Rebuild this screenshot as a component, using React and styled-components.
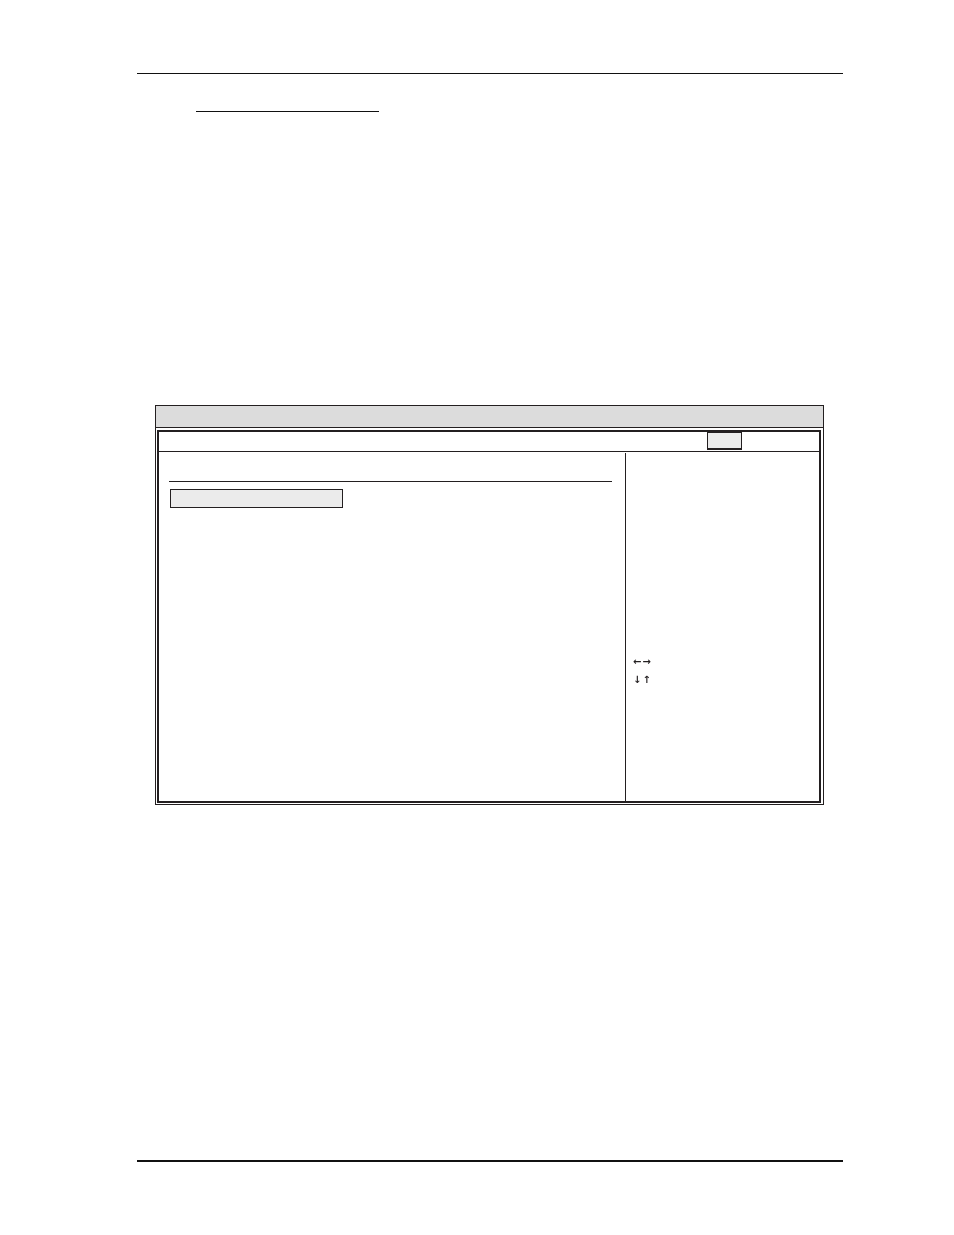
import React from 'react';
import styled, { createGlobalStyle } from 'styled-components';

const Global = createGlobalStyle`
  html, body {
    margin: 0;
    padding: 0;
    background: #fff;
    font-family: "Liberation Sans", Arial, sans-serif;
    -webkit-font-smoothing: antialiased;
  }
`;

const Page = styled.div`
  width: 954px;
  height: 1235px;
  box-sizing: border-box;
  padding: 73px 111px 0 137px;
  display: flex;
  flex-direction: column;
`;

const Rule = styled.div`
  height: ${(p) => p.$thick || 1}px;
  background: #111;
  width: 706px;
  flex-shrink: 0;
`;

const Heading = styled.div`
  margin: 37px 0 0 59px;
  width: 183px;
  border-bottom: 1px solid #111;
  height: 0;
`;

const Bios = styled.div`
  margin: 293px 0 0 18px;
  width: 669px;
  height: 400px;
  box-sizing: border-box;
  border: 1px solid #231f20;
  display: flex;
  flex-direction: column;
`;

const TitleBar = styled.div`
  height: 21px;
  flex-shrink: 0;
  background: #dcdcdc;
  border-bottom: 1px solid #231f20;
`;

const InnerWrap = styled.div`
  flex: 1;
  padding: 2px 2px 1px 1px;
  display: flex;
`;

const Inner = styled.div`
  flex: 1;
  border: 2px solid #231f20;
  display: flex;
  flex-direction: column;
`;

const MenuBar = styled.div`
  height: 19px;
  flex-shrink: 0;
  border-bottom: 1px solid #231f20;
  display: flex;
  align-items: flex-start;
  padding: 0 0 0 548px;
`;

const Tab = styled.div`
  width: 35px;
  height: 18px;
  box-sizing: border-box;
  border: 1px solid #231f20;
  border-bottom-width: 2px;
  background: #ebebeb;
`;

const Main = styled.div`
  flex: 1;
  display: flex;
  padding-top: 1px;
`;

const LeftPanel = styled.div`
  width: 467px;
  flex-shrink: 0;
  box-sizing: border-box;
  border-right: 1px solid #231f20;
  padding: 28px 13px 0 10px;
  display: flex;
  flex-direction: column;
`;

const SectionLine = styled.div`
  height: 1px;
  background: #231f20;
`;

const Field = styled.div`
  margin: 7px 0 0 1px;
  width: 173px;
  height: 19px;
  box-sizing: border-box;
  border: 1px solid #231f20;
  background: #ebebeb;
`;

const RightPanel = styled.div`
  flex: 1;
  padding: 201px 0 0 7px;
  display: flex;
  flex-direction: column;
  gap: 2px;
`;

const Keys = styled.div`
  font-family: "DejaVu Sans", sans-serif;
  font-size: 10px;
  line-height: 16px;
  font-weight: bold;
  color: #231f20;
  letter-spacing: 1px;
  will-change: transform;
`;

const Footer = styled.div`
  margin-top: 355px;
`;

export default function App() {
  return (
    <>
      <Global />
      <Page>
        <Rule />
        <Heading />
        <Bios>
          <TitleBar />
          <InnerWrap>
            <Inner>
              <MenuBar>
                <Tab />
              </MenuBar>
              <Main>
                <LeftPanel>
                  <SectionLine />
                  <Field />
                </LeftPanel>
                <RightPanel>
                  <Keys>{'\u2190\u2192'}</Keys>
                  <Keys>{'\u2193\u2191'}</Keys>
                </RightPanel>
              </Main>
            </Inner>
          </InnerWrap>
        </Bios>
        <Footer>
          <Rule $thick={2} />
        </Footer>
      </Page>
    </>
  );
}
